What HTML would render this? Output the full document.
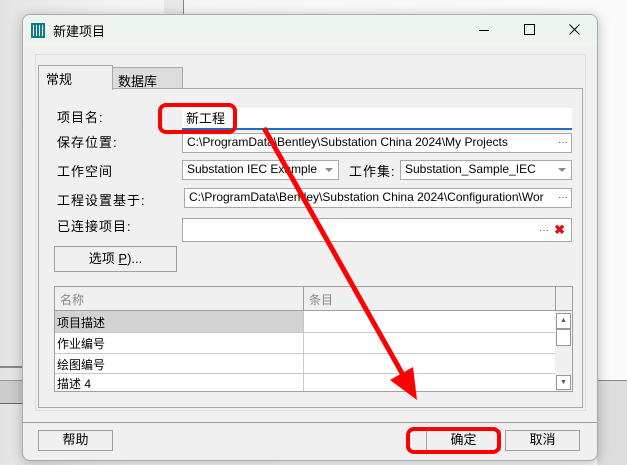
<!DOCTYPE html>
<html><head><meta charset="utf-8"><style>
*{box-sizing:border-box;margin:0;padding:0}
body{width:627px;height:465px;position:relative;overflow:hidden;background:#f3f3f3;font-family:"Liberation Sans","Noto Sans CJK SC",sans-serif;font-size:12px;color:#000}
.a{position:absolute}
.inp{position:absolute;background:#fff;border:1px solid #a8a8a8;font-size:12px;line-height:17px;padding-left:4px;white-space:nowrap;overflow:hidden}
.lbl{position:absolute;font-size:13px;letter-spacing:1px}
.btn{position:absolute;border:1px solid #a0a0a0;background:#f0f0f0;text-align:center;font-size:13px;line-height:18px}
.dots{position:absolute;right:3px;top:0;font-size:10px;color:#444}
.dd{position:absolute;right:5px;top:7px;width:0;height:0;border-left:4px solid transparent;border-right:4px solid transparent;border-top:4px solid #888}
</style></head><body>
<div class="a" style="left:0;top:0;width:627px;height:465px;background:linear-gradient(90deg,#e4e4e4,#f5f5f5 20%,#fafafa)"></div>
<div class="a" style="left:164px;top:0;width:20px;height:14px;background:#e8e8e8;border-right:1px solid #888"></div>
<div class="a" style="left:0;top:366px;width:22px;height:2px;background:#888"></div>
<div class="a" style="left:0;top:380px;width:22px;height:24px;background:#ccc;border-top:1px solid #999;border-bottom:1px solid #666"></div>
<div class="a" style="left:597px;top:380px;width:30px;height:85px;background:#ddd;border-top:1px solid #888"></div>
<!-- dialog -->
<div class="a" style="left:22px;top:14px;width:576px;height:447px;background:#f0f0f0;border:1px solid #aaa;border-radius:8px;overflow:hidden;box-shadow:0 2px 12px rgba(0,0,0,.25)">
 <div class="a" style="left:0;top:0;width:576px;height:31px;background:#eef5f0"></div>
 <div class="a" style="left:8px;top:8px;width:14px;height:15px;background:#0e7c86"></div>
 <div class="a" style="left:10px;top:10px;width:10px;height:11px;background:repeating-linear-gradient(90deg,#fff 0 1px,transparent 1px 3px)"></div>
 <div class="a" style="left:30px;top:6px;font-size:13px">新建项目</div>
 <div class="a" style="left:456px;top:15px;width:10px;height:1px;background:#000"></div>
 <div class="a" style="left:501px;top:9px;width:11px;height:11px;border:1px solid #000"></div>
 <svg class="a" style="left:546px;top:9px" width="11" height="11"><path d="M0.5 0.5L10.5 10.5M10.5 0.5L0.5 10.5" stroke="#000" stroke-width="1"/></svg>
 <div class="a" style="left:12px;top:39px;width:551px;height:357px;border:1px solid #ddd"></div>
 <div class="a" style="left:15px;top:73px;width:545px;height:320px;border:1px solid #a8a8a8"></div>
 <div class="a" style="left:89px;top:52px;width:71px;height:22px;background:#dcdcdc;border:1px solid #a8a8a8;padding:3px 0 0 5px;font-size:13px">数据库</div>
 <div class="a" style="left:15px;top:50px;width:75px;height:25px;background:#f0f0f0;border:1px solid #a8a8a8;border-bottom:none;padding:3px 0 0 7px;font-size:13px">常规</div>
</div>
<div class="lbl" style="left:57px;top:107px">项目名:</div>
<div class="inp" style="left:182px;top:108px;width:390px;height:22px;border:none;border-bottom:2px solid #1a6fc4;font-size:13px;line-height:22px">新工程</div>
<div class="lbl" style="left:57px;top:132px">保存位置:</div>
<div class="inp" style="left:182px;top:133px;width:390px;height:20px">C:\ProgramData\Bentley\Substation China 2024\My Projects<span class="dots">···</span></div>
<div class="lbl" style="left:57px;top:161px">工作空间</div>
<div class="inp" style="left:182px;top:160px;width:157px;height:20px">Substation IEC Example<span class="dd"></span></div>
<div class="lbl" style="left:349px;top:161px">工作集:</div>
<div class="inp" style="left:400px;top:160px;width:172px;height:20px">Substation_Sample_IEC<span class="dd"></span></div>
<div class="lbl" style="left:57px;top:190px">工程设置基于:</div>
<div class="inp" style="left:184px;top:188px;width:388px;height:20px">C:\ProgramData\Bentley\Substation China 2024\Configuration\Wor<span class="dots" style="background:#fff;padding-left:2px">···</span></div>
<div class="lbl" style="left:57px;top:216px">已连接项目:</div>
<div class="inp" style="left:182px;top:218px;width:390px;height:24px"><span class="a" style="right:22px;top:3px;font-size:10px;color:#444">···</span><span class="a" style="right:6px;top:2px;color:#e01010;font-weight:bold;font-size:13px">✖</span></div>
<div class="btn" style="left:54px;top:246px;width:123px;height:26px;line-height:24px">选项 <u>P</u>)...</div>
<!-- table -->
<div class="a" style="left:54px;top:286px;width:519px;height:106px;border:1px solid #a0a0a0;background:#fff">
 <div class="a" style="left:0;top:0;width:517px;height:24px;background:#f0f0f0;border-bottom:1px solid #a0a0a0"></div>
 <div class="a" style="left:5px;top:4px;color:#888;font-size:12px">名称</div>
 <div class="a" style="left:248px;top:0;width:1px;height:104px;background:#c8c8c8"></div>
 <div class="a" style="left:248px;top:0;width:1px;height:24px;background:#a0a0a0"></div>
 <div class="a" style="left:254px;top:4px;color:#888;font-size:12px">条目</div>
 <div class="a" style="left:500px;top:0;width:1px;height:24px;background:#a0a0a0"></div>
 <div class="a" style="left:0;top:24px;width:248px;height:21px;background:#d2d2d2"></div>
 <div class="a" style="left:0;top:45px;width:500px;height:1px;background:#c8c8c8"></div>
 <div class="a" style="left:0;top:66px;width:500px;height:1px;background:#c8c8c8"></div>
 <div class="a" style="left:0;top:86px;width:500px;height:1px;background:#c8c8c8"></div>
 <div class="a" style="left:2px;top:27px">项目描述</div>
 <div class="a" style="left:2px;top:48px">作业编号</div>
 <div class="a" style="left:2px;top:69px">绘图编号</div>
 <div class="a" style="left:2px;top:88px">描述 4</div>
 <div class="a" style="left:500px;top:24px;width:17px;height:80px;background:#f0f0f0"></div>
 <div class="a" style="left:501px;top:26px;width:15px;height:16px;border:1px solid #999;background:#fff;font-size:7px;text-align:center;line-height:14px;color:#555">▲</div>
 <div class="a" style="left:501px;top:42px;width:15px;height:17px;border:1px solid #999;background:#fff"></div>
 <div class="a" style="left:501px;top:88px;width:15px;height:15px;border:1px solid #999;background:#fff;font-size:7px;text-align:center;line-height:13px;color:#555">▼</div>
</div>
<div class="a" style="left:23px;top:422px;width:574px;height:1px;background:#a0a0a0"></div>
<div class="btn" style="left:38px;top:430px;width:75px;height:21px">帮助</div>
<div class="btn" style="left:426px;top:430px;width:75px;height:21px">确定</div>
<div class="btn" style="left:505px;top:430px;width:75px;height:21px">取消</div>
<!-- annotations -->
<div class="a" style="left:158px;top:103px;width:79px;height:31px;border:4px solid #f00;border-radius:8px"></div>
<div class="a" style="left:406px;top:427px;width:95px;height:27px;border:4px solid #f00;border-radius:8px"></div>
<svg class="a" style="left:0;top:0" width="627" height="465"><line x1="264" y1="128" x2="403" y2="375" stroke="#f00" stroke-width="5"/><polygon points="390,380 417,400 413,367" fill="#f00"/></svg>
</body></html>
